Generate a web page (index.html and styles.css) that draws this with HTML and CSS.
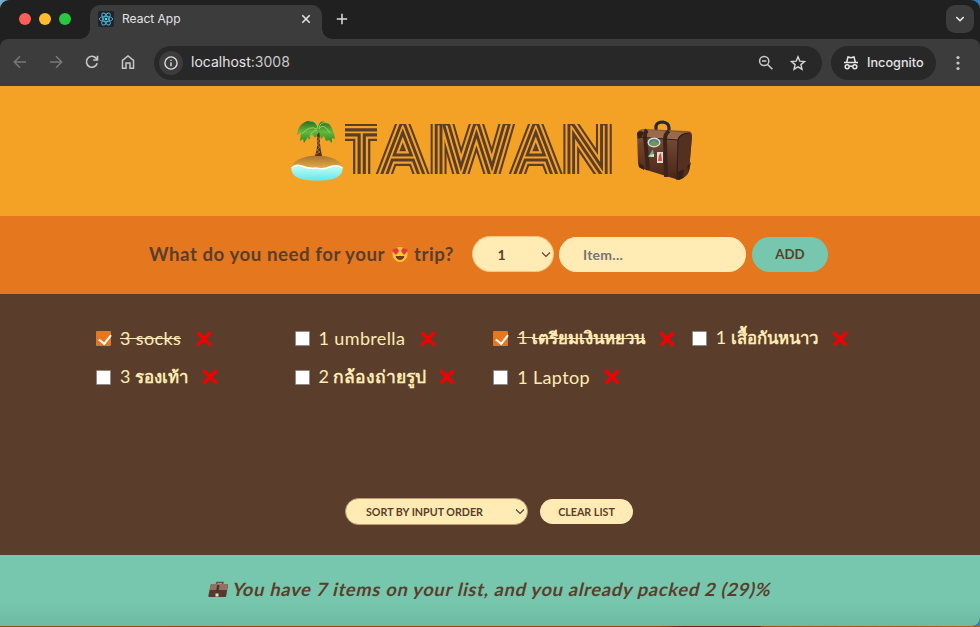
FILE: index.html
```html
<!DOCTYPE html>
<html lang="en">
<head>
<meta charset="utf-8">
<title>React App</title>
<link rel="stylesheet" href="styles.css">
</head>
<body>
<div class="window">
  <div class="tabs">
    <div class="lights"><i class="red"></i><i class="yellow"></i><i class="green"></i></div>
    <div class="tab">
      <svg class="favicon" width="16" height="16" viewBox="0 0 16 16"><rect width="16" height="16" rx="2" fill="#20232a"/><g fill="none" stroke="#4eb9d4" stroke-width=".9"><ellipse cx="8" cy="8" rx="6.7" ry="2.6"/><ellipse cx="8" cy="8" rx="6.7" ry="2.6" transform="rotate(60 8 8)"/><ellipse cx="8" cy="8" rx="6.7" ry="2.6" transform="rotate(120 8 8)"/></g><circle cx="8" cy="8" r="1.3" fill="#61dafb"/></svg>
      <span class="tab-title">React App</span>
      <svg width="10" height="10" viewBox="0 0 10 10"><path d="M1.3 1.3l7.4 7.4M8.7 1.3L1.3 8.7" stroke="#e3e3e3" stroke-width="1.6"/></svg>
    </div>
    <svg class="plus" width="12" height="12" viewBox="0 0 12 12"><path d="M6 .8v10.4M.8 6h10.4" stroke="#ddd" stroke-width="1.5"/></svg>
    <div class="tab-menu"><svg width="10" height="8" viewBox="0 0 10 8"><path d="M1.3 2L5 5.7 8.7 2" fill="none" stroke="#eee" stroke-width="1.6"/></svg></div>
  </div>
  <div class="toolbar">
    <div class="nav">
      <svg width="14" height="14" viewBox="0 0 14 14" fill="none" stroke="#777" stroke-width="1.5"><path d="M13 7H1.5M7 1.3L1.3 7 7 12.7"/></svg>
      <svg width="14" height="14" viewBox="0 0 14 14" fill="none" stroke="#777" stroke-width="1.5"><path d="M1 7h11.5M7 1.3L12.7 7 7 12.7"/></svg>
      <svg width="14" height="14" viewBox="0 0 14 14" fill="none" stroke="#c7c7c7" stroke-width="1.6"><path d="M12.2 8.3A5.5 5.5 0 1 1 11 3.1L12.3 4.6M12.5 .8V5H8.2"/></svg>
      <svg width="14" height="14" viewBox="0 0 14 14" fill="none" stroke="#c7c7c7" stroke-width="1.5"><path d="M1.5 13.2V5.3L7 1l5.5 4.3v7.9H9V8H5v5.2z"/></svg>
    </div>
    <div class="address">
      <div class="info"><svg width="14" height="14" viewBox="0 0 14 14"><circle cx="7" cy="7" r="6.1" fill="none" stroke="#ddd" stroke-width="1.4"/><path d="M7 6.2v4M7 3.7v1.4" stroke="#ddd" stroke-width="1.4"/></svg></div>
      <span class="url">localhost<b>:3008</b></span>
      <svg class="lens" width="16" height="16" viewBox="0 0 16 16" fill="none" stroke="#ccc"><circle cx="6.2" cy="6" r="4.6" stroke-width="1.5"/><path d="M4 6h4.4M9.6 9.5l4.8 4.8" stroke-width="1.6"/></svg>
      <svg width="16" height="16" viewBox="0 0 16 16"><path d="M8 1.8l1.8 4.3 4.7.4-3.6 3.1 1.1 4.6L8 11.8l-4 2.4 1.1-4.6-3.6-3.1 4.7-.4z" fill="none" stroke="#d5d5d5" stroke-width="1.4"/></svg>
    </div>
    <div class="incognito">
      <svg width="16" height="16" viewBox="0 0 16 16" fill="none" stroke="#e8e8e8" stroke-width="1.5"><path d="M1 7.6h14M3.7 7.2L5 2l3 .8L11 2l1.3 5.2M6.4 11.6q1.6-1 3.2 0"/><circle cx="4.2" cy="11.8" r="2"/><circle cx="11.8" cy="11.8" r="2"/></svg>
      <span>Incognito</span>
    </div>
    <svg class="dots" width="4" height="16" viewBox="0 0 4 16" fill="#c7c7c7"><circle cx="2" cy="2.5" r="1.6"/><circle cx="2" cy="8" r="1.6"/><circle cx="2" cy="13.5" r="1.6"/></svg>
  </div>

  <header class="hero">
    <svg class="island" width="52" height="62" viewBox="0 0 52 62">
      <defs>
        <linearGradient id="sand" x2="0" y2="1"><stop stop-color="#a87332"/><stop offset=".5" stop-color="#e5ab43"/><stop offset="1" stop-color="#f3bc55"/></linearGradient>
        <linearGradient id="sea" x2="0" y2="1"><stop stop-color="#c8fff0"/><stop offset="1" stop-color="#62e7ef"/></linearGradient>
        <linearGradient id="leaf" x2="0" y2="1"><stop stop-color="#286c20"/><stop offset=".5" stop-color="#65b83c"/><stop offset="1" stop-color="#2c8525"/></linearGradient>
      </defs>
      <ellipse cx="26" cy="48" rx="25.500" ry="12.500" fill="url(#sand)"/>
      <path d="M.5 48q4-4 10-2 8 3 14 2 8 2 14-1 8-3 13 1 1 12.500-25.500 12.500T.5 48z" fill="url(#sea)"/>
      <path d="M.5 48q4-4 10-2 8 3 14 2 8 2 14-1 8-3 13 1" fill="none" stroke="#fff" stroke-width="1.500"/>
      <path d="M25 12q3 12-1 24h7Q28 23 29 12z" fill="#553316"/>
      <path d="M26 17l3 2-3 2 3 2-3 2 3 2-3 3 3 2-4 2" fill="none" stroke="#a37c4b" stroke-width=".9"/>
      <path d="M27 7Q23-2 14 2 7 5 6 15l4-3-1 9 3-2 1 4 4-6 1 3 3-6 3 4 4-6 2 7 3-3 2 5 3-1 3 3v-5l3 1Q42 4 34 2q-5-2-7 5z" fill="url(#leaf)"/>
      <path d="M26 9Q18 5 11 14M27 9q-1-9-9-8M28 9q4-7 11 4M28 8q1-7 9-5M26 10q-6 1-7 7" fill="none" stroke="#9bd468" stroke-width=".9"/>
    </svg>
    <svg class="title" width="268" height="72" viewBox="0 0 268 72">
      <defs>
        <clipPath id="bar"><path d="M0 4h32v50H0z"/></clipPath>
        <clipPath id="rest"><path d="M30 4h237v50H30z"/></clipPath>
        <text id="first" class="small" x="-1" y="56">T</text>
        <text id="others" y="54.500" x="40.400 93.200 107.900 185 237.600" transform="scale(.92 1)">AIWAN</text>
      </defs>
      <g clip-path="url(#bar)"><use href="#first" class="s1"/><use href="#first" class="s2"/><use href="#first" class="s3"/><use href="#first" class="s4"/></g>
      <g clip-path="url(#rest)"><use href="#others" class="s1"/><use href="#others" class="s2"/><use href="#others" class="s3"/><use href="#others" class="s4"/></g>
    </svg>
    <svg class="suitcase" width="58" height="62" viewBox="0 0 58 62">
      <defs><linearGradient id="case" x2="0" y2="1"><stop stop-color="#8b5b42"/><stop offset=".3" stop-color="#6f432f"/><stop offset="1" stop-color="#482517"/></linearGradient></defs>
      <path d="M21 10V6q1-4 7-4 6 1 6 6v3" fill="none" stroke="#29282a" stroke-width="3.2"/>
      <path d="M2 13q2-4 7-4l43 2q5 0 5 4l-3 36q-2 6-10 9L5 48q-2-2-2-5z" fill="url(#case)"/>
      <path d="M3 13q4-4 9-3l43 3q-10 0-12 7L3 17z" fill="#9a6a4d"/>
      <path d="M43 19q2-7 12-6 2 1 2 4l-3 34q-2 6-10 9z" fill="#543020"/>
      <path d="M12 10q-2 2-2 7l3 33M34 11q-4 3-4 8l1 38" fill="none" stroke="#3d241b" stroke-width="4"/>
      <path d="M42 60l1-40q2-7 12-7M3 17l27 2 13 1" fill="none" stroke="#302019" stroke-width="1.2"/>
      <path d="M2 13l3-2 4 1-2 5-4 2zM4 43l5 3v4l-5-3zM43 52l6-3-1 9-5 2zM52 47l4-5-2 9z" fill="#352119"/>
      <ellipse cx="19" cy="22.500" rx="6.5" ry="5" fill="#d8ddc9"/><ellipse cx="19" cy="22.500" rx="5" ry="3.600" fill="#477d9a"/><path d="M14 24l5-4 5 4-4 2z" fill="#79964c"/>
      <path d="M13 37l5-8 1 8z" fill="#5eb4aa"/><path d="M13 36l6-2v3z" fill="#dfe6b4"/><path d="M22 32h6v11h-6z" fill="#dedbd2"/><path d="M23 41l1-6 2-2 1 8z" fill="#d04d45"/>
    </svg>
  </header>

  <section class="form">
    <h3><span class="q1">What do you need for your</span>
      <svg width="16" height="17" viewBox="0 0 16 17"><circle cx="8" cy="8.500" r="7.500" fill="#ffc832"/><path d="M3.500 10h9q-1 4-4.500 4t-4.500-4z" fill="#7b3a1d"/><path d="M4 9L.7 5.300Q0 2 3 3q1-2 3 0l1 2zM12 9l3.300-3.700Q16 2 13 3q-1-2-3 0L9 5z" fill="#ee3340"/></svg>
      <span class="q2">trip?</span></h3>
    <div class="select qty"><span>1</span><svg width="10" height="7" viewBox="0 0 10 7"><path d="M1 1.500l4 4 4-4"/></svg></div>
    <div class="input">Item...</div>
    <div class="add">ADD</div>
  </section>

  <main class="list">
    <ul>
      <li class="done"><i class="box"></i><span class="w62">3 socks</span><b class="x"></b></li>
      <li><i class="box"></i><span class="w87">1 umbrella</span><b class="x"></b></li>
      <li class="done"><i class="box"></i><span class="w128">1 <em>เตรียมเงินหยวน</em></span><b class="x"></b></li>
      <li><i class="box"></i><span class="w102">1 <em>เสื้อกันหนาว</em></span><b class="x"></b></li>
      <li><i class="box"></i><span class="w68">3 <em>รองเท้า</em></span><b class="x"></b></li>
      <li><i class="box"></i><span class="w106">2 <em>กล้องถ่ายรูป</em></span><b class="x"></b></li>
      <li><i class="box"></i><span class="w73">1 Laptop</span><b class="x"></b></li>
    </ul>
    <div class="actions">
      <div class="select sort"><span>SORT BY INPUT ORDER</span><svg width="10" height="7" viewBox="0 0 10 7"><path d="M1 1.500l4 4 4-4"/></svg></div>
      <div class="clear">CLEAR LIST</div>
    </div>
  </main>

  <footer>
    <svg width="20" height="17" viewBox="0 0 20 17"><path d="M8 4l1-2.500h6L14.500 4" fill="none" stroke="#655044" stroke-width="1.400"/><path d="M4 3q-1 0-1.300 1L.3 15q0 1 1 1H17q1 0 1.200-1L20 4q0-1-1-1z" fill="#59382d"/><path d="M4 3q-1 0-1.300 1L1.500 9H19l1-5q0-1-1-1z" fill="#927163"/><path d="M9 4h2.500l-1 8H8z" fill="#49352e"/><path d="M7.500 12.500h3v3h-3z" fill="#e8ddd2"/></svg>
    <span>You have 7 items on your list, and you already packed 2 (29)%</span>
  </footer>
</div>
<div class="desktop"></div>
</body>
</html>
```
FILE: styles.css
```css
* { box-sizing: border-box; }
body { margin: 0; width: 980px; height: 627px; overflow: hidden; background: linear-gradient(90deg, #79add0 0 50%, #327cc4 50%); font-family: Lato, "Noto Sans", sans-serif; color: #5a3e2b; }
svg { display: block; flex: none; }
.window { width: 980px; height: 626px; border-radius: 9px 9px 8px 0; overflow: hidden; background: #202020; }
.desktop { height: 1px; background: linear-gradient(90deg, #8c5310 0 40px, #a34011 240px, #a34011 660px, #771d12 682px 760px, #a34a12 762px, #ba5b13); }

.tabs { height: 39px; display: flex; align-items: flex-start; font-family: Inter, sans-serif; }
.lights { display: flex; gap: 8px; padding: 13px 0 0 19px; width: 90px; }
.lights i { width: 12px; height: 12px; border-radius: 50%; }
.red { background: #ff5f57; } .yellow { background: #febc2e; } .green { background: #28c840; }
.tab { position: relative; width: 232px; height: 34px; margin-top: 5px; padding: 0 11px 6px 8px; display: flex; align-items: center; background: #3c3c3c; border-radius: 10px 10px 0 0; }
.tab::before, .tab::after { content: ""; position: absolute; bottom: 0; width: 10px; height: 10px; }
.tab::before { left: -10px; background: radial-gradient(circle at 0 0, transparent 9.5px, #3c3c3c 10px); }
.tab::after { right: -10px; background: radial-gradient(circle at 100% 0, transparent 9.5px, #3c3c3c 10px); }
.tab-title { flex: 1; margin: 0 0 2px 8px; font-size: 12px; color: #e4e4e4; }
.plus { margin: 13px auto 0 14px; }
.tab-menu { width: 28px; height: 28px; margin: 5px 6px 0 0; border-radius: 9px; background: #3c3c3c; display: grid; place-items: center; }

.toolbar { height: 47px; display: flex; align-items: center; background: #3c3c3c; border-radius: 8px 8px 0 0; font-family: Inter, sans-serif; color: #e4e4e4; }
.nav { display: flex; gap: 22px; padding: 0 0 1px 13px; width: 154px; }
.address { width: 668px; height: 34px; border-radius: 17px; background: #282828; display: flex; align-items: center; padding: 0 16px 0 5px; }
.info { width: 24px; height: 24px; border-radius: 50%; background: #3c3c3c; display: grid; place-items: center; }
.url { flex: 1; margin: 0 0 2px 8px; font-size: 14px; }
.url b { font-weight: 400; color: #c8c8c8; }
.lens { margin-right: 16px; }
.incognito { width: 105px; height: 34px; margin-left: 9px; border-radius: 17px; background: #282828; display: flex; align-items: center; padding-left: 12px; gap: 8px; font-size: 12.7px; font-weight: 500; }
.dots { margin-left: 20px; }

.hero { height: 129.5px; background: #f4a226; display: flex; padding: 34px 0 0 291px; }
.title { margin: 0 0 0 2px; overflow: visible; font-family: Lato, sans-serif; font-weight: 100; font-size: 70px; stroke-miterlimit: 8; }
.small { font-size: 62px; }
.s1 { fill: #5a3e2b; stroke: #5a3e2b; stroke-width: 16.5px; }
.s2 { fill: #f4a226; stroke: #f4a226; stroke-width: 12px; }
.s3 { fill: #5a3e2b; stroke: #5a3e2b; stroke-width: 7.5px; }
.s4 { fill: #f4a226; stroke: #f4a226; stroke-width: 1.2px; }
.suitcase { margin-left: 22px; }

.form { height: 78px; background: #e5771f; display: flex; align-items: center; padding: 0 0 1px 149px; }
.form h3 { margin: 0; width: 322.5px; display: flex; align-items: center; font-size: 18.7px; font-weight: 700; white-space: nowrap; }
.form h3 svg { margin: 0 6px 0 7px; }
.q1 { letter-spacing: .52px; }
.q2 { letter-spacing: .5px; }
.select, .input, .add, .clear { background: #ffebb3; border-radius: 40px; display: flex; align-items: center; font-weight: 700; }
.select { justify-content: space-between; border: 1px solid #f6c77c; }
.select path { fill: none; stroke: #5a3e2b; stroke-width: 1.1; }
.qty { width: 82.5px; height: 36px; padding: 0 2px 0 25px; font-size: 14px; }
.input { width: 187px; height: 35px; margin-left: 5px; padding-left: 24px; font-size: 14px; color: #757575; letter-spacing: .25px; }
.add { width: 76px; height: 35px; margin-left: 6px; justify-content: center; background: #76c7ad; font-size: 13.3px; }

.list { height: 261px; background: #5a3e2b; color: #ffebb3; padding: 26px 0 0 96px; display: flex; flex-direction: column; }
ul { margin: 0; padding: 0; list-style: none; display: grid; grid-template-columns: repeat(4, 198.6px); grid-auto-rows: 38.5px; }
li { display: flex; align-items: center; font-size: 18px; white-space: nowrap; }
li span { margin: 0 15px 1px 9px; letter-spacing: .35px; }
li em { font-style: normal; font-weight: 700; font-size: 16.8px; letter-spacing: 0; margin-left: -1px; }
.done span { text-decoration: line-through; }
.box { width: 15px; height: 15px; background: #fff; border: 1px solid #8b8b8b; border-radius: 1px; }
.done .box { background: #e5771f; border: 0; }
.done .box::after { content: ""; display: block; width: 6px; height: 10px; margin: 1px 0 0 5px; border: solid #fff; border-width: 0 2.5px 2.5px 0; transform: rotate(38deg); }
.x { width: 14px; height: 14px; background: linear-gradient(45deg, transparent 42%, #f00000 42% 58%, transparent 58%), linear-gradient(-45deg, transparent 42%, #f00000 42% 58%, transparent 58%); }
.w62 { width: 62px; } .w87 { width: 87px; } .w128 { width: 128px; } .w102 { width: 102px; } .w68 { width: 68px; } .w106 { width: 106px; } .w73 { width: 73px; }
.w106 em { font-size: 17.5px; }
.actions { margin: auto 0 30px 249px; display: flex; align-items: center; gap: 12px; color: #5a3e2b; }
.sort { width: 183px; height: 27px; padding: 0 2px 0 20px; font-size: 10.7px; border-color: #b89d70; }
.clear { width: 93px; height: 25px; justify-content: center; font-size: 10.7px; }

footer { height: 71.5px; background: linear-gradient(#76c7ad 65%, #6ebaa2); display: flex; align-items: center; padding: 0 0 2px 208px; gap: 5px; font-size: 18.3px; font-weight: 700; white-space: nowrap; }
footer span { transform: skewX(-13deg); letter-spacing: .7px; }
```
